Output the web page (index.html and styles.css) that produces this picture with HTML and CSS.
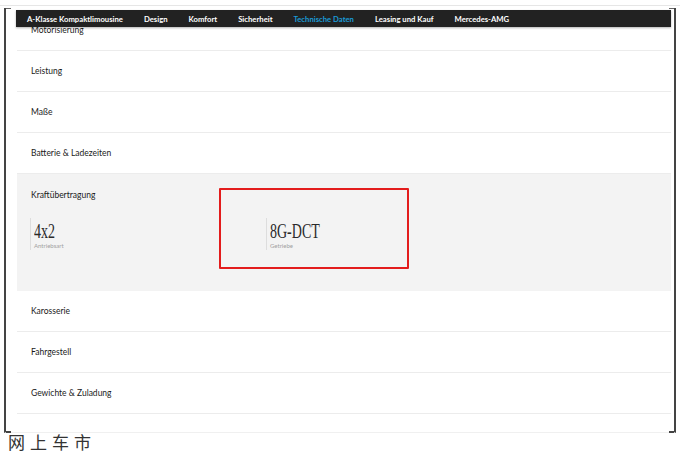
FILE: index.html
```html
<!DOCTYPE html>
<html lang="de">

<head>
    <meta charset="UTF-8">
    <meta name="viewport" content="width=device-width, initial-scale=1.0">
    <title>Technische Daten</title>
    <link rel="stylesheet" href="styles.css">
</head>

<body>
    <div class="topline"></div>
    <div class="frame">
        <nav class="nav">
            <a>A-Klasse Kompaktlimousine</a>
            <a>Design</a>
            <a>Komfort</a>
            <a>Sicherheit</a>
            <a class="active">Technische Daten</a>
            <a>Leasing und Kauf</a>
            <a>Mercedes-AMG</a>
        </nav>
        <div class="list">
            <div class="row">Motorisierung</div>
            <div class="row">Leistung</div>
            <div class="row">Maße</div>
            <div class="row">Batterie &amp; Ladezeiten</div>
            <div class="row open">
                <div class="title">Kraftübertragung</div>
                <div class="specs">
                    <div class="spec">
                        <div class="val"><span>4x2</span></div>
                        <div class="cap">Antriebsart</div>
                    </div>
                    <div class="spec">
                        <div class="val"><span>8G-DCT</span></div>
                        <div class="cap">Getriebe</div>
                    </div>
                </div>
                <div class="mark"></div>
            </div>
            <div class="row">Karosserie</div>
            <div class="row">Fahrgestell</div>
            <div class="row">Gewichte &amp; Zuladung</div>
        </div>
    </div>
    <div class="brand">网上车市</div>
</body>

</html>
```

FILE: styles.css
```css
* {
    margin: 0;
    padding: 0;
    box-sizing: border-box;
}

body {
    width: 680px;
    height: 453px;
    overflow: hidden;
    background-color: #fff;
    font-family: Lato, "Open Sans", sans-serif;
    color: #222;
}

.topline {
    height: 1px;
    margin-top: 5px;
    background-color: #e6e6e6;
}

.frame {
    position: relative;
    height: 425px;
    margin: 2px 4px 0 4px;
    padding: 2px 3px 0 11px;
    border-left: 2px solid #444;
    border-right: 2px solid #444;
    border-bottom: 1px solid #f0f0f0;
}

/* corner ticks of the bracket frame */
.frame::before,
.frame::after {
    content: "";
    position: absolute;
    top: 0;
    bottom: -1px;
    width: 5px;
    border-top: 1px solid #666;
    border-bottom: 2px solid #444;
}

.frame::before {
    left: 0;
}

.frame::after {
    right: 0;
}

.nav {
    position: absolute;
    top: 2px;
    left: 10px;
    right: 3px;
    height: 17px;
    z-index: 2;
    display: flex;
    align-items: center;
    gap: 21px;
    padding-left: 11px;
    background-color: #222;
    box-shadow: 0 1px 2px rgba(0, 0, 0, 0.3);
}

.nav a {
    color: #fff;
    font-size: 7.7px;
    font-weight: bold;
    white-space: nowrap;
}

.nav a.active {
    color: #1a9ad6;
}

.row {
    height: 41px;
    padding: 15px 0 0 14px;
    border-bottom: 1px solid #ececec;
    font-size: 8.5px;
    color: #1a1a1a;
}

.row.open {
    position: relative;
    height: 117px;
    padding-top: 16px;
    background-color: #f3f3f3;
    border-bottom: none;
}

.specs {
    display: flex;
    margin-top: 18px;
}

.spec {
    width: 237px;
    height: 32px;
    margin-left: -1px;
    padding: 3px 0 0 3px;
    border-left: 1px solid #ddd;
}

.val {
    height: 20px;
}

.val span {
    display: inline-block;
    font-family: "Liberation Serif", serif;
    font-size: 20px;
    line-height: 20px;
    color: #2a2a2a;
    transform: scaleX(0.7);
    transform-origin: left;
}

.cap {
    margin-top: 1px;
    font-size: 6px;
    color: #a0a0a0;
}

.mark {
    position: absolute;
    left: 202px;
    top: 14px;
    width: 190px;
    height: 81px;
    border: 2px solid #e31c1c;
    border-radius: 1px;
}

.brand {
    margin: 0 0 0 8px;
    font-family: "Noto Sans CJK SC", sans-serif;
    font-size: 17px;
    line-height: 18px;
    letter-spacing: 5px;
    color: #333;
}
```
